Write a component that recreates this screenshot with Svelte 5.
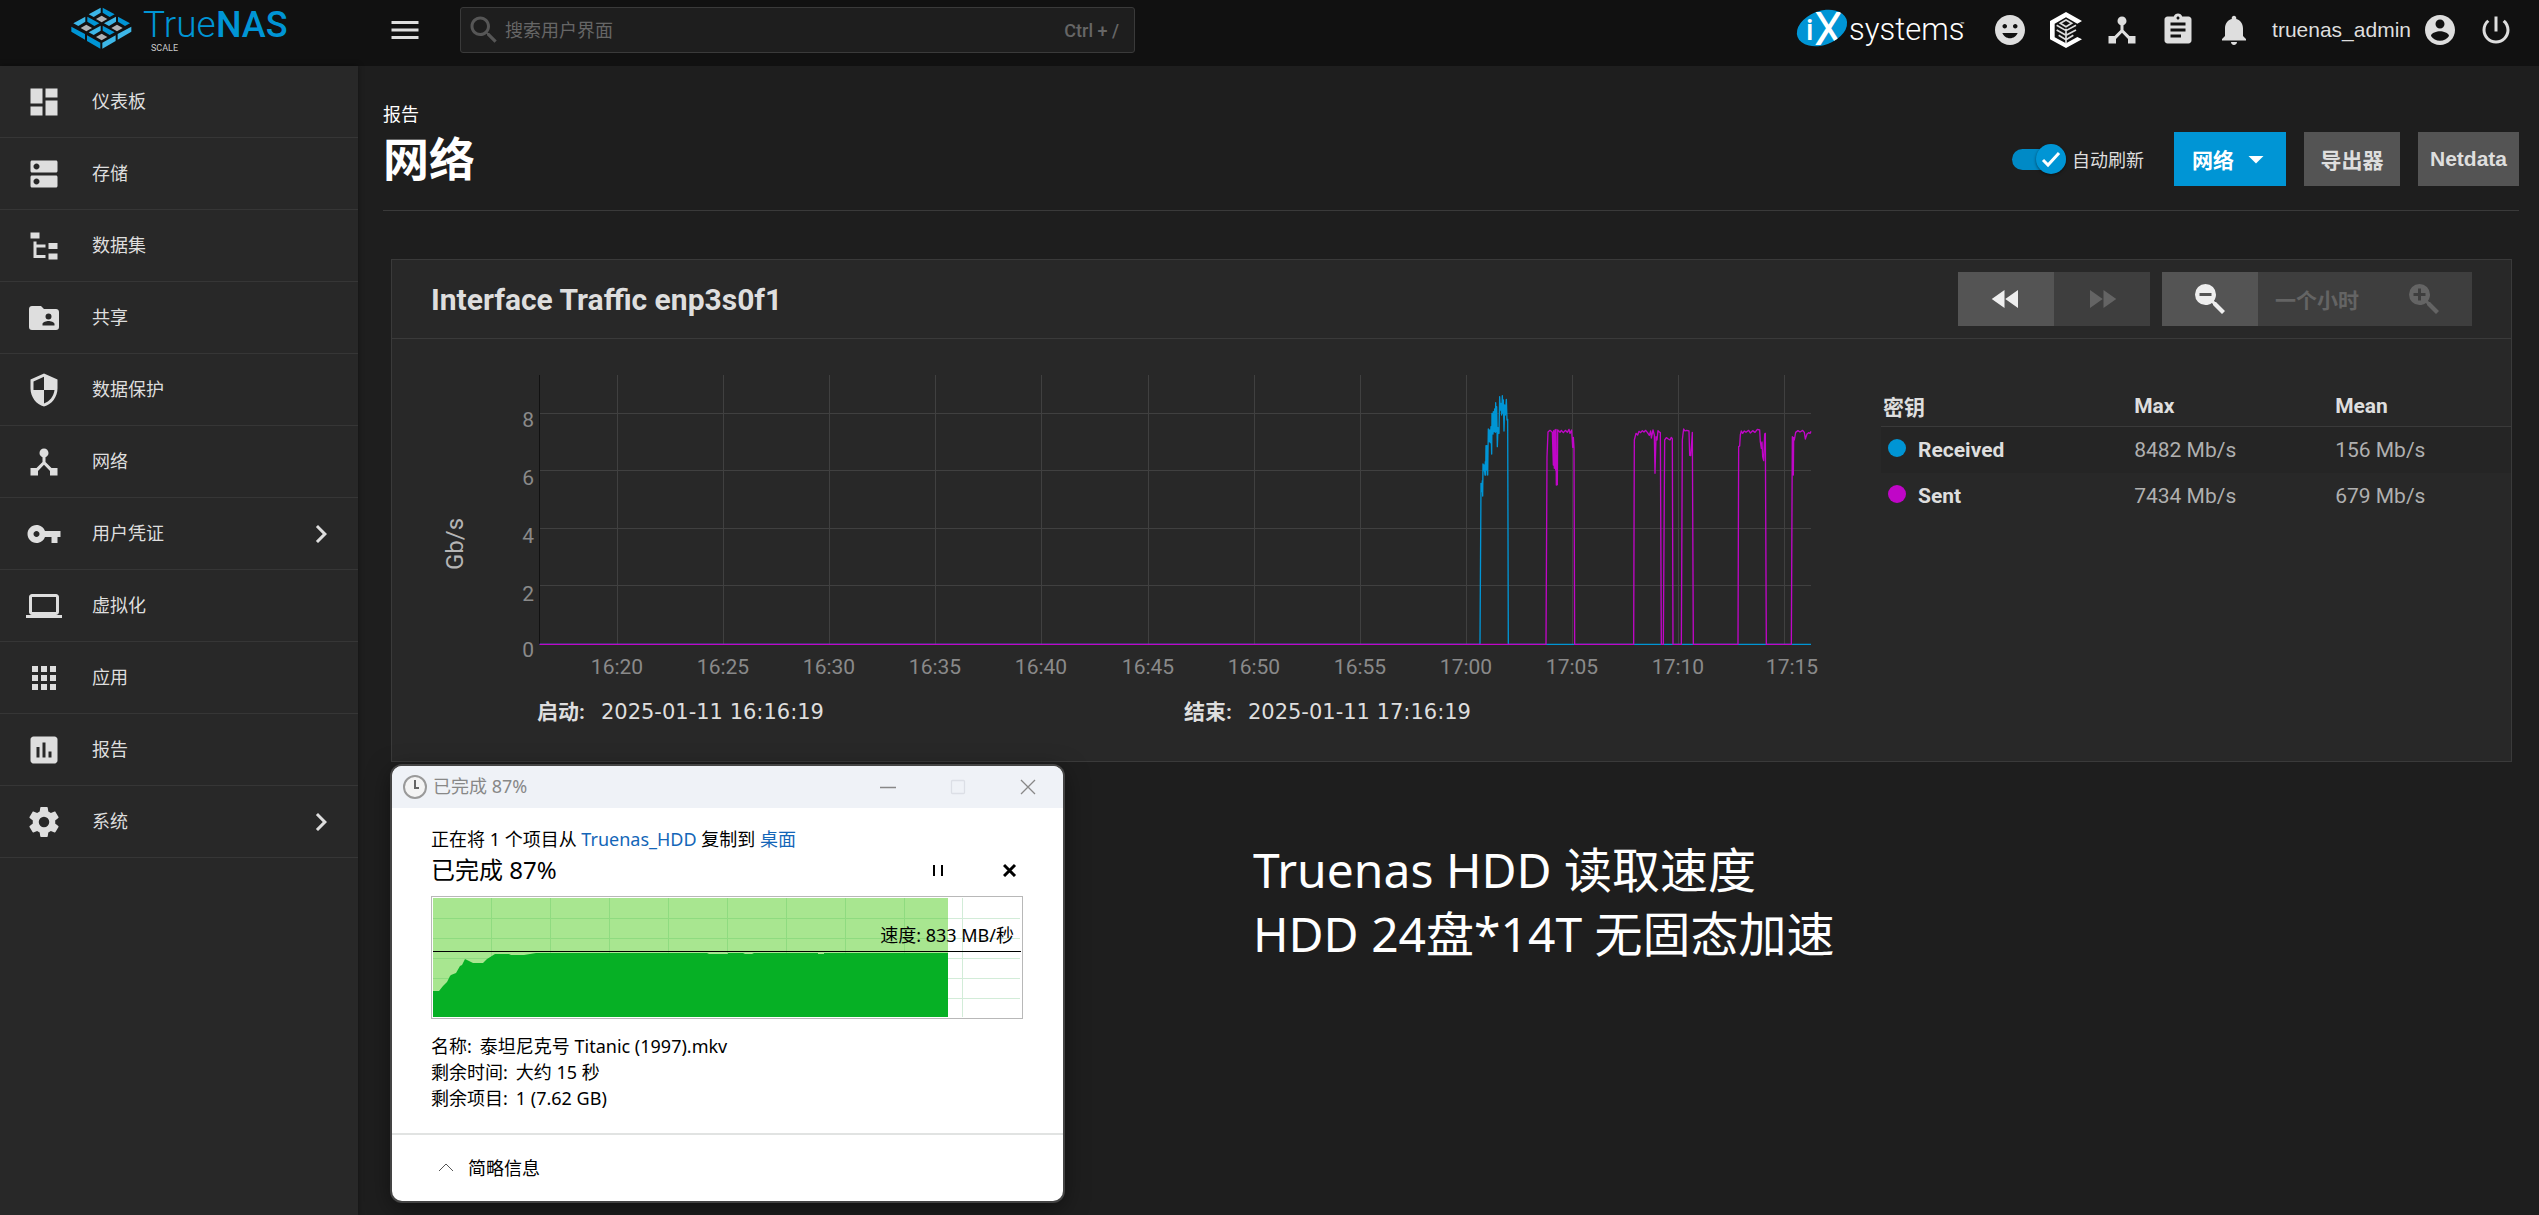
<script>
  const icons = {
    menu: 'M3 18h18v-2H3v2zm0-5h18v-2H3v2zm0-7v2h18V6H3z',
    search: 'M15.5 14h-.79l-.28-.27C15.41 12.59 16 11.11 16 9.5 16 5.91 13.09 3 9.5 3S3 5.91 3 9.5 5.91 16 9.5 16c1.61 0 3.09-.59 4.23-1.57l.27.28v.79l5 4.99L20.49 19l-4.99-5zm-6 0C7.01 14 5 11.99 5 9.5S7.01 5 9.5 5 14 7.01 14 9.5 11.99 14 9.5 14z',
    dashboard: 'M3 13h8V3H3v10zm0 8h8v-6H3v6zm10 0h8V11h-8v10zm0-18v6h8V3h-8z',
    storage: 'M20 13H4c-.55 0-1 .45-1 1v6c0 .55.45 1 1 1h16c.55 0 1-.45 1-1v-6c0-.55-.45-1-1-1zM7 19c-1.1 0-2-.9-2-2s.9-2 2-2 2 .9 2 2-.9 2-2 2zM20 3H4c-.55 0-1 .45-1 1v6c0 .55.45 1 1 1h16c.55 0 1-.45 1-1V4c0-.55-.45-1-1-1zM7 9c-1.1 0-2-.9-2-2s.9-2 2-2 2 .9 2 2-.9 2-2 2z',
    tree: 'M3 3h6v4H3V3m12 7h6v4h-6v-4m0 7h6v4h-6v-4m-2-4H7v5h6v2H5V9h2v2h6v2z',
    share: 'M19 17H11V16C11 14.67 13.67 14 15 14C16.33 14 19 14.67 19 16M15 9A2 2 0 0 1 17 11A2 2 0 0 1 15 13A2 2 0 0 1 13 11C13 9.89 13.9 9 15 9M20 6H12L10 4H4C2.89 4 2 4.89 2 6V18A2 2 0 0 0 4 20H20A2 2 0 0 0 22 18V8C22 6.89 21.1 6 20 6Z',
    shield: 'M12 1L3 5v6c0 5.55 3.84 10.74 9 12 5.16-1.26 9-6.45 9-12V5l-9-4zm0 10.99h7c-.53 4.12-3.28 7.79-7 8.94V12H5V6.3l7-3.11v8.8z',
    hub: 'M17 16l-4-4V8.82C14.16 8.4 15 7.3 15 6c0-1.66-1.34-3-3-3S9 4.34 9 6c0 1.3.84 2.4 2 2.82V12l-4 4H3v5h5v-3.05l4-4.2 4 4.2V21h5v-5h-4z',
    key: 'M12.65 10C11.83 7.67 9.61 6 7 6c-3.31 0-6 2.69-6 6s2.69 6 6 6c2.61 0 4.83-1.67 5.65-4H17v4h4v-4h2v-4H12.65zM7 14c-1.1 0-2-.9-2-2s.9-2 2-2 2 .9 2 2-.9 2-2 2z',
    laptop: 'M20 18c1.1 0 1.99-.9 1.99-2L22 6c0-1.1-.9-2-2-2H4c-1.1 0-2 .9-2 2v10c0 1.1.9 2 2 2H0v2h24v-2h-4zM4 6h16v10H4V6z',
    apps: 'M4 8h4V4H4v4zm6 12h4v-4h-4v4zm-6 0h4v-4H4v4zm0-6h4v-4H4v4zm6 0h4v-4h-4v4zm6-10v4h4V4h-4zm-6 4h4V4h-4v4zm6 6h4v-4h-4v4zm0 6h4v-4h-4v4z',
    chart: 'M19 3H5c-1.1 0-2 .9-2 2v14c0 1.1.9 2 2 2h14c1.1 0 2-.9 2-2V5c0-1.1-.9-2-2-2zM9 17H7v-7h2v7zm4 0h-2V7h2v10zm4 0h-2v-4h2v4z',
    cog: 'M12 15.5A3.5 3.5 0 0 1 8.5 12A3.5 3.5 0 0 1 12 8.5A3.5 3.5 0 0 1 15.5 12A3.5 3.5 0 0 1 12 15.5M19.43 12.97C19.47 12.65 19.5 12.33 19.5 12C19.5 11.67 19.47 11.34 19.43 11L21.54 9.37C21.73 9.22 21.78 8.95 21.66 8.73L19.66 5.27C19.54 5.05 19.27 4.96 19.05 5.05L16.56 6.05C16.04 5.66 15.5 5.32 14.87 5.07L14.5 2.42C14.46 2.18 14.25 2 14 2H10C9.75 2 9.54 2.18 9.5 2.42L9.13 5.07C8.5 5.32 7.96 5.66 7.44 6.05L4.95 5.05C4.73 4.96 4.46 5.05 4.34 5.27L2.34 8.73C2.21 8.95 2.27 9.22 2.46 9.37L4.57 11C4.53 11.34 4.5 11.67 4.5 12C4.5 12.33 4.53 12.65 4.57 12.97L2.46 14.63C2.27 14.78 2.21 15.05 2.34 15.27L4.34 18.73C4.46 18.95 4.73 19.03 4.95 18.95L7.44 17.94C7.96 18.34 8.5 18.68 9.13 18.93L9.5 21.58C9.54 21.82 9.75 22 10 22H14C14.25 22 14.46 21.82 14.5 21.58L14.87 18.93C15.5 18.67 16.04 18.34 16.56 17.94L19.05 18.95C19.27 19.03 19.54 18.95 19.66 18.73L21.66 15.27C21.78 15.05 21.73 14.78 21.54 14.63L19.43 12.97Z',
    chevron: 'M10 6L8.59 7.41 13.17 12l-4.58 4.59L10 18l6-6z',
    mood: 'M12 2C6.48 2 2 6.48 2 12s4.48 10 10 10 10-4.48 10-10S17.52 2 12 2zM8.5 8c.83 0 1.5.67 1.5 1.5S9.33 11 8.5 11 7 10.33 7 9.5 7.67 8 8.5 8zm7 0c.83 0 1.5.67 1.5 1.5s-.67 1.5-1.5 1.5S14 10.33 14 9.5 14.67 8 15.5 8zM12 17.5c-2.33 0-4.31-1.46-5.11-3.5h10.22c-.8 2.04-2.78 3.5-5.11 3.5z',
    clipboard: 'M19 3h-4.18C14.4 1.84 13.3 1 12 1c-1.3 0-2.4.84-2.82 2H5c-1.1 0-2 .9-2 2v14c0 1.1.9 2 2 2h14c1.1 0 2-.9 2-2V5c0-1.1-.9-2-2-2zm-7 0c.55 0 1 .45 1 1s-.45 1-1 1-1-.45-1-1 .45-1 1-1zm2 14H7v-2h7v2zm3-4H7v-2h10v2zm0-4H7V7h10v2z',
    bell: 'M12 22c1.1 0 2-.9 2-2h-4c0 1.1.89 2 2 2zm6-6v-5c0-3.07-1.64-5.64-4.5-6.32V4c0-.83-.67-1.5-1.5-1.5s-1.5.67-1.5 1.5v.68C7.63 5.36 6 7.92 6 11v5l-2 2v1h16v-1l-2-2z',
    account: 'M12 2C6.48 2 2 6.48 2 12s4.48 10 10 10 10-4.48 10-10S17.52 2 12 2zm0 3c1.66 0 3 1.34 3 3s-1.34 3-3 3-3-1.34-3-3 1.34-3 3-3zm0 14.2c-2.5 0-4.71-1.28-6-3.22.03-1.99 4-3.08 6-3.08 1.99 0 5.97 1.09 6 3.08-1.29 1.94-3.5 3.22-6 3.22z',
    power: 'M13 3h-2v10h2V3zm4.83 2.17l-1.42 1.42C17.99 7.86 19 9.81 19 12c0 3.87-3.13 7-7 7s-7-3.13-7-7c0-2.19 1.01-4.14 2.58-5.42L6.17 5.17C4.23 6.82 3 9.26 3 12c0 4.97 4.03 9 9 9s9-4.03 9-9c0-2.74-1.23-5.18-3.17-6.83z',
    dropdown: 'M7 10l5 5 5-5z',
    rewind: 'M11 18V6l-8.5 6 8.5 6zm.5-6l8.5 6V6l-8.5 6z',
    forward: 'M4 18l8.5-6L4 6v12zm9-12v12l8.5-6L13 6z',
    zoomOut: 'M9 2A7 7 0 0 1 16 9C16 10.57 15.5 12 14.61 13.19L15.41 14H16L22 20L20 22L14 16V15.41L13.19 14.61C12 15.5 10.57 16 9 16A7 7 0 0 1 2 9A7 7 0 0 1 9 2M5 8V10H13V8H5Z',
    zoomIn: 'M9 2A7 7 0 0 1 16 9C16 10.57 15.5 12 14.61 13.19L15.41 14H16L22 20L20 22L14 16V15.41L13.19 14.61C12 15.5 10.57 16 9 16A7 7 0 0 1 2 9A7 7 0 0 1 9 2M8 5V8H5V10H8V13H10V10H13V8H10V5H8Z',
  };

  const navItems = [
    { icon: 'dashboard', label: '仪表板' },
    { icon: 'storage', label: '存储' },
    { icon: 'tree', label: '数据集' },
    { icon: 'share', label: '共享' },
    { icon: 'shield', label: '数据保护' },
    { icon: 'hub', label: '网络' },
    { icon: 'key', label: '用户凭证', children: true },
    { icon: 'laptop', label: '虚拟化' },
    { icon: 'apps', label: '应用' },
    { icon: 'chart', label: '报告' },
    { icon: 'cog', label: '系统', children: true },
  ];

  const legend = [
    { name: 'Received', color: '#0095d5', max: '8482 Mb/s', mean: '156 Mb/s' },
    { name: 'Sent', color: '#c006c7', max: '7434 Mb/s', mean: '679 Mb/s' },
  ];

  const logoCells = [[64, 37], [18, 64], [110, 64], [64, 91]];

  const xLabels = ['16:20', '16:25', '16:30', '16:35', '16:40', '16:45', '16:50', '16:55', '17:00', '17:05', '17:10', '17:15'];
  // the last label sits a little right of its grid line
  const xTicks = xLabels.map((label, i) => {
    const x = Math.round(186 + i * 106.1);
    return { label, x, textX: i === xLabels.length - 1 ? x + 8 : x };
  });

  const yTicks = [
    { label: '8', y: 53, textY: 67 },
    { label: '6', y: 110, textY: 125 },
    { label: '4', y: 168, textY: 183 },
    { label: '2', y: 225, textY: 241 },
    { label: '0', y: null, textY: 297 },
  ];

  // both traces are in thirds of a plot pixel, with y = 853 as zero
  const received =
    'M-2701 853H120L123 370L125 395L127 362L128 408L129 312L131 332L132 315L135 345L136 305L137 345L138 257L140 330L141 257L143 345L145 207L147 245L149 210L151 248L153 200L155 282L156 160L159 222L160 155L162 215L164 147L166 217L167 128L169 215L170 140L172 260L174 203L177 220L179 110L181 150L183 130L185 165L187 107L189 160L190 120L192 213L194 135L196 165L199 118L201 180L203 178L205 853H1113';
  const sent =
    'M-2701 853H318L321 290L324 216L330 211L337 217L340 315L341 212L343 325L345 210L347 330L348 208L349 375L352 374L353 210L360 217L364 211L370 218L376 211L382 217L387 208L390 220L395 210L398 262L400 232L402 264L404 853H581L583 240L588 220L593 225L597 214L602 218L607 212L612 216L617 211L622 217L628 226L632 213L634 234L639 210L643 225L645 340L648 230L651 240L654 212L658 216L661 218L664 853H670L674 240L679 233L685 237L690 240L694 232L697 236L699 853H724L727 240L729 222L731 207L735 213L740 211L747 213L749 286L752 287L754 262L757 217L760 853H894L896 260L899 258L901 225L904 213L908 220L913 213L918 217L926 211L931 219L938 212L945 217L952 208L959 210L961 245L964 265L966 246L968 290L971 302L974 222L976 220L979 853H1054L1057 230L1060 345L1061 232L1063 240L1067 217L1074 212L1080 216L1088 211L1093 217L1096 237L1101 222L1106 218L1110 220L1113 214';

  const copyCols = Array.from({ length: 8 }, (_, i) => 59 + i * 59);
  const copyRows = [20, 40, 60, 80, 100];

  let autoRefresh = $state(true);
  let query = $state('');
</script>

{#snippet icon(name)}
  <svg class="icon" viewBox="0 0 24 24" aria-hidden="true"><path fill-rule="evenodd" d={icons[name]} /></svg>
{/snippet}

<div class="app">
  <header class="topbar">
    <a class="brand" href="#home" aria-label="TrueNAS SCALE">
      <svg width="220" height="60" viewBox="0 0 220 60">
        <g transform="translate(1 0) scale(.3333)">
          {#each logoCells as [cx, cy]}
            <g transform="translate({cx + 28} {cy + 20})">
              <path fill="#3db7e8" d="M-39-14L-3-34V-19L-24-6Z" />
              <path fill="#0095d5" d="M39-14L3-34V-19L24-6Z" />
              <path fill="#aeb2b5" d="M0-10L17 0L0 10L-17 0Z" />
            </g>
          {/each}
          <path fill="#0095d5" d="M1 80L42 102V119L1 95ZM48 106L88 128V146L48 123Z" />
          <path fill="#3db7e8" d="M181 80L140 102V119L181 95ZM134 106L94 128V146L134 123Z" />
        </g>
        <text class="logo-light" x="73" y="37">True</text>
        <text class="logo-bold" x="146" y="37">NAS</text>
        <text class="logo-sub" x="81" y="51">SCALE</text>
      </svg>
    </a>
    <button type="button" class="icon-btn menu" aria-label="Toggle menu">{@render icon('menu')}</button>
    <div class="search">
      {@render icon('search')}
      <input type="text" placeholder="搜索用户界面" aria-label="搜索用户界面" bind:value={query} />
      <kbd>Ctrl + /</kbd>
    </div>
    <div class="tools">
      <a class="ix" href="#ix" aria-label="iXsystems">
        <svg width="176" height="60" viewBox="0 0 176 60">
          <defs><clipPath id="ix-clip"><ellipse cx="28" cy="28" rx="26" ry="17" transform="rotate(-20 28 28)" /></clipPath></defs>
          <ellipse cx="28" cy="28" rx="26" ry="17" fill="#0095d5" transform="rotate(-20 28 28)" />
          <g clip-path="url(#ix-clip)">
            <text class="ix-i" x="12" y="40">i</text>
            <text class="ix-x" x="20" y="45">X</text>
          </g>
          <text class="ix-name" x="55" y="40">systems</text>
          <text class="ix-tm" x="166" y="27">™</text>
        </svg>
      </a>
      <button type="button" class="icon-btn" aria-label="Feedback">{@render icon('mood')}</button>
      <button type="button" class="icon-btn" aria-label="TrueCommand">
        <svg class="icon" viewBox="0 0 108 108" aria-hidden="true">
          <path fill="#fff" d="M54 0L102 27L88 35L54 16L20 35V76L54 94L88 75L102 82L54 108L6 82V27Z" />
          <path fill="none" stroke="#dedede" stroke-width="5" d="M54 24L71 34L54 44L37 34ZM26 40L54 56L84 40M26 54L54 70L84 54M32 70L54 83L76 70M54 50V94" />
        </svg>
      </button>
      <button type="button" class="icon-btn" aria-label="Directory services">{@render icon('hub')}</button>
      <button type="button" class="icon-btn" aria-label="Jobs">{@render icon('clipboard')}</button>
      <button type="button" class="icon-btn" aria-label="Alerts">{@render icon('bell')}</button>
      <button type="button" class="user">
        <span>truenas_admin</span>
        {@render icon('account')}
      </button>
      <button type="button" class="icon-btn" aria-label="Power">{@render icon('power')}</button>
    </div>
  </header>

  <div class="body">
    <nav class="sidebar">
      {#each navItems as item}
        <a class="nav-item" href="#{item.icon}">
          {@render icon(item.icon)}
          <span>{item.label}</span>
          {#if item.children}{@render icon('chevron')}{/if}
        </a>
      {/each}
    </nav>

    <main>
      <div class="page-head">
        <div>
          <a class="crumb" href="#reports">报告</a>
          <h1>网络</h1>
        </div>
        <div class="actions">
          <div class="toggle">
            <input id="auto-refresh" type="checkbox" role="switch" bind:checked={autoRefresh} />
            <label for="auto-refresh">
              <span class="track">
                <span class="knob">
                  <svg width="24" height="24" viewBox="0 0 24 24" fill="none" stroke="#fff" stroke-width="3"><path d="M4 13l5 5L20 6" /></svg>
                </span>
              </span>
              自动刷新
            </label>
          </div>
          <button type="button" class="btn primary">网络{@render icon('dropdown')}</button>
          <button type="button" class="btn">导出器</button>
          <button type="button" class="btn">Netdata</button>
        </div>
      </div>

      <section class="card">
        <div class="card-head">
          <h2>Interface Traffic enp3s0f1</h2>
          <div class="group">
            <button type="button" class="step" aria-label="Back">{@render icon('rewind')}</button>
            <button type="button" class="step" aria-label="Forward" disabled>{@render icon('forward')}</button>
          </div>
          <div class="group">
            <button type="button" class="step" aria-label="Zoom out">{@render icon('zoomOut')}</button>
            <span class="range">一个小时</span>
            <button type="button" class="step" aria-label="Zoom in" disabled>{@render icon('zoomIn')}</button>
          </div>
        </div>

        <div class="card-body">
          <div class="chart">
            <svg class="plot" viewBox="0 0 1400 330" role="img" aria-label="Interface Traffic enp3s0f1">
              <g class="grid">
                {#each xTicks as tick}
                  <line x1={tick.x + 0.5} x2={tick.x + 0.5} y1="15" y2="284" />
                {/each}
                {#each yTicks as tick}
                  {#if tick.y}
                    <line x1="109" x2="1380" y1={tick.y + 0.5} y2={tick.y + 0.5} />
                  {/if}
                {/each}
              </g>
              <line class="axis" x1="108.5" x2="108.5" y1="15" y2="284" />
              <g class="traces" transform="translate(1009 0) scale(.33333)">
                <path d={received} stroke={legend[0].color} />
                <path d={sent} stroke={legend[1].color} />
              </g>
              {#each yTicks as tick}
                <text class="tick" x="103" y={tick.textY} text-anchor="end">{tick.label}</text>
              {/each}
              {#each xTicks as tick}
                <text class="tick" x={tick.textX} y="314" text-anchor="middle">{tick.label}</text>
              {/each}
              <text class="unit" text-anchor="middle" transform="translate(32 184) rotate(-90)">Gb/s</text>
            </svg>
            <dl class="span">
              <div><dt>启动:</dt><dd>2025-01-11 16:16:19</dd></div>
              <div><dt>结束:</dt><dd>2025-01-11 17:16:19</dd></div>
            </dl>
          </div>

          <table class="legend">
            <thead>
              <tr><th>密钥</th><th>Max</th><th>Mean</th></tr>
            </thead>
            <tbody>
              {#each legend as row}
                <tr>
                  <th scope="row"><span class="dot" style:background={row.color}></span>{row.name}</th>
                  <td>{row.max}</td>
                  <td>{row.mean}</td>
                </tr>
              {/each}
            </tbody>
          </table>
        </div>
      </section>

      <div class="lower">
        <section class="window">
          <div class="titlebar">
            <svg width="24" height="24" viewBox="0 0 24 24" aria-hidden="true">
              <circle cx="12" cy="12" r="11" fill="#f4f4f4" stroke="#9a9a9a" stroke-width="2" />
              <path d="M12 5v8h4" fill="none" stroke="#666" stroke-width="2" />
            </svg>
            <span>已完成 87%</span>
            <button type="button" aria-label="Minimize"><svg width="16" height="16" viewBox="0 0 16 16"><path d="M0 8.5h16" /></svg></button>
            <button type="button" aria-label="Maximize" disabled><svg width="16" height="16" viewBox="0 0 16 16"><rect x="1.5" y="1.5" width="13" height="13" rx="1" /></svg></button>
            <button type="button" aria-label="Close"><svg width="16" height="16" viewBox="0 0 16 16"><path d="M1 1l14 14M15 1L1 15" /></svg></button>
          </div>
          <div class="copy">
            <p>正在将 1 个项目从 <a href="#source">Truenas_HDD</a> 复制到 <a href="#desktop">桌面</a></p>
            <div class="status">
              <strong>已完成 87%</strong>
              <button type="button" aria-label="Pause"><svg width="14" height="14" viewBox="0 0 14 14"><path d="M3 2v11M11 2v11" /></svg></button>
              <button type="button" aria-label="Cancel"><svg width="14" height="14" viewBox="0 0 14 14"><path stroke-width="3" d="M1 2l11 11M12 2L1 13" /></svg></button>
            </div>
            <svg class="speed" viewBox="0 0 592 123" role="img" aria-label="速度: 833 MB/秒">
              <rect x=".5" y=".5" width="591" height="122" fill="#fff" stroke="#b8b8b8" />
              <g stroke="#d2ecd8">
                {#each copyRows as y}<line x1="517" x2="589" y1={y + 2.5} y2={y + 2.5} />{/each}
                <line x1="531.5" x2="531.5" y1="2" y2="121" />
              </g>
              <rect x="2" y="2" width="515" height="119" fill="#a8e690" />
              <g stroke="#8fdb80">
                {#each copyRows as y}<line x1="2" x2="517" y1={y + 2.5} y2={y + 2.5} />{/each}
                {#each copyCols as x}<line x1={x + 1.5} x2={x + 1.5} y1="2" y2="121" />{/each}
              </g>
              <path fill="#06b025" d="M2 121V95H8L12 90L16 86L19 80L20 79L25 77L29 70L31 69L34 63L38 65L42 67H52L56 63L64 58H78L80 59H93L105 57H276L278 58H297V57H312L314 58H321L323 57H387V58H393V57H517V121Z" />
              <line x1="2" x2="590" y1="55.5" y2="55.5" stroke="#000" />
              <text x="583" y="46" text-anchor="end">速度: 833 MB/秒</text>
            </svg>
            <dl>
              <div><dt>名称:</dt><dd>泰坦尼克号 Titanic (1997).mkv</dd></div>
              <div><dt>剩余时间:</dt><dd>大约 15 秒</dd></div>
              <div><dt>剩余项目:</dt><dd>1 (7.62 GB)</dd></div>
            </dl>
          </div>
          <button type="button" class="less">
            <svg width="16" height="10" viewBox="0 0 16 10"><path d="M1 9l7-7 7 7" fill="none" stroke="#555" /></svg>
            简略信息
          </button>
        </section>

        <p class="note">Truenas HDD 读取速度<br />HDD 24盘*14T 无固态加速</p>
      </div>
    </main>
  </div>
</div>

<style>
  :global(body) {
    background: #1e1e1e;
  }

  .app {
    --fg: #dedede;
    --line: #3a3a3a;
    --blue: #0095d5;
    display: flex;
    flex-direction: column;
    min-height: 100vh;
    color: var(--fg);
    font-family: Roboto, "Noto Sans CJK SC", sans-serif;
    font-size: 18px;
  }

  a { color: inherit; text-decoration: none; }
  h1, h2, p, dl, dd { margin: 0; }

  button {
    padding: 0;
    border: none;
    background: none;
    color: inherit;
    font: inherit;
    cursor: pointer;
  }

  .icon {
    display: block;
    flex-shrink: 0;
    width: 36px;
    height: 36px;
    fill: currentColor;
  }

  .topbar {
    display: flex;
    align-items: center;
    box-sizing: border-box;
    height: 66px;
    padding: 0 25px 6px 0;
    background: #111;
  }

  .brand {
    width: 317px;
    padding-left: 70px;
  }

  .brand svg, .ix svg { display: block; overflow: visible; }

  .logo-light { font: 300 37px Roboto, sans-serif; fill: var(--blue); }
  .logo-bold { font: 500 36px Roboto, sans-serif; fill: var(--blue); }
  .logo-sub { font: 9px Roboto, sans-serif; fill: #ccc; }
  .ix-i { font: 500 29px Roboto, sans-serif; fill: #fff; }
  .ix-x { font: 46px Roboto, sans-serif; fill: #fff; }
  .ix-name { font: 300 31px Roboto, sans-serif; fill: #fff; }
  .ix-tm { font: 7px Roboto, sans-serif; fill: #fff; }

  .search {
    display: flex;
    align-items: center;
    box-sizing: border-box;
    flex: 0 1 675px;
    height: 46px;
    margin-left: 37px;
    padding: 0 15px 0 5px;
    border: 1px solid var(--line);
    border-radius: 3px;
    background: #1e1e1e;
    color: #565656;
  }

  .search input {
    flex: 1;
    min-width: 0;
    padding: 0 3px;
    border: none;
    outline: none;
    background: transparent;
    color: var(--fg);
    font: inherit;
  }

  .search input::placeholder { color: #666; opacity: 1; }
  .search kbd { color: #666; font: inherit; font-weight: 500; }

  .tools {
    display: flex;
    align-items: center;
    gap: 20px;
    margin-left: auto;
  }

  .ix { margin-right: 2px; }

  .user {
    display: flex;
    align-items: center;
    gap: 11px;
    font: 21px "Liberation Sans", sans-serif;
  }

  .body {
    display: flex;
    flex: 1;
  }

  .sidebar {
    flex: 0 0 358px;
    background: #282828;
    box-shadow: 0 0 6px rgba(0, 0, 0, 0.4);
  }

  .nav-item {
    display: flex;
    align-items: center;
    box-sizing: border-box;
    height: 72px;
    padding: 0 19px 0 26px;
    border-bottom: 1px solid #363636;
  }

  .nav-item span {
    flex: 1;
    padding: 0 0 4px 30px;
  }

  main {
    flex: 1;
    min-width: 0;
    padding: 36px 20px 12px 25px;
  }

  .page-head {
    display: flex;
    align-items: flex-end;
    justify-content: space-between;
    padding-bottom: 24px;
    border-bottom: 1px solid var(--line);
  }

  .crumb {
    display: block;
    line-height: 26px;
    color: #fff;
  }

  h1 {
    margin-top: 6px;
    color: #fff;
    font-size: 46px;
    font-weight: 700;
    line-height: 52px;
  }

  .actions {
    display: flex;
    align-items: center;
    gap: 18px;
  }

  .toggle { margin-right: 12px; }

  .toggle input {
    position: absolute;
    opacity: 0;
  }

  .toggle label {
    display: flex;
    align-items: center;
    gap: 6px;
    cursor: pointer;
  }

  .track {
    display: flex;
    align-items: center;
    justify-content: flex-end;
    width: 54px;
    height: 21px;
    border-radius: 11px;
    background: #008ac6;
  }

  .knob {
    display: grid;
    place-items: center;
    width: 30px;
    height: 30px;
    border-radius: 50%;
    background: var(--blue);
    box-shadow: 0 1px 3px rgba(0, 0, 0, 0.5);
  }

  .btn {
    display: flex;
    align-items: center;
    justify-content: center;
    box-sizing: border-box;
    min-width: 96px;
    height: 54px;
    padding: 0 12px;
    background: #545454;
    font-family: "Liberation Sans", "Noto Sans CJK SC", sans-serif;
    font-size: 21px;
    font-weight: 700;
  }

  .btn.primary {
    gap: 4px;
    padding-left: 18px;
    background: var(--blue);
    color: #fff;
  }

  .card {
    margin: 48px 7px 0 8px;
    border: 1px solid var(--line);
    background: #282828;
  }

  .card-head {
    display: flex;
    align-items: center;
    gap: 12px;
    height: 78px;
    padding: 0 39px;
    border-bottom: 1px solid var(--line);
  }

  h2 {
    flex: 1;
    font-size: 30px;
    font-weight: 700;
  }

  .group {
    display: flex;
    align-items: center;
    height: 54px;
    background: #3e3e3e;
  }

  .step {
    display: grid;
    place-items: center;
    width: 96px;
    height: 54px;
    background: #545454;
    color: #eee;
  }

  .step:disabled {
    background: #3e3e3e;
    color: #646464;
    cursor: default;
  }

  .range {
    padding: 0 17px;
    color: #646464;
    font-size: 21px;
    font-weight: 700;
  }

  .card-body {
    display: flex;
    gap: 50px;
    padding: 21px 0 33px 39px;
  }

  .chart {
    flex: 1;
    min-width: 0;
  }

  .plot {
    display: block;
    width: 100%;
  }

  .grid line { stroke: #404040; }
  .axis { stroke: #111; }

  .traces path {
    fill: none;
    stroke-width: 4;
    stroke-linejoin: round;
  }

  .tick { fill: #8a8a8a; font-size: 21px; }
  .unit { fill: #b5b5b5; font-size: 24px; }

  .span {
    display: grid;
    grid-template-columns: 1fr 1fr;
    margin-top: 6px;
    padding-left: 106px;
    font-size: 21px;
    line-height: 32px;
  }

  .span div {
    display: flex;
    gap: 16px;
  }

  .span dt { font-weight: 700; }
  .span dd { font-family: "DejaVu Sans", sans-serif; }

  .legend {
    flex: 0 0 630px;
    align-self: flex-start;
    width: 630px;
    margin-top: 26px;
    border-collapse: collapse;
    table-layout: fixed;
    font-size: 21px;
    text-align: left;
  }

  .legend th, .legend td { padding: 0; }

  .legend thead th {
    width: 28%;
    height: 40px;
    border-bottom: 1px solid var(--line);
  }

  .legend thead th:first-child { width: 40%; padding-left: 2px; }
  .legend thead th:nth-child(2) { width: 32%; }
  .legend tbody tr { height: 46px; }
  .legend tbody tr:nth-child(odd) { background: #252525; }
  .legend td { color: #b0b0b0; }
  .legend tbody th { padding-left: 7px; }

  .dot {
    display: inline-block;
    width: 18px;
    height: 18px;
    margin-right: 12px;
    border-radius: 50%;
  }

  .lower {
    display: flex;
    align-items: flex-start;
    gap: 190px;
    margin-top: 4px;
    padding-left: 9px;
  }

  .window {
    flex: 0 0 671px;
    overflow: hidden;
    border-radius: 10px;
    background: #fff;
    box-shadow: 0 0 0 2px #444, 0 6px 24px rgba(0, 0, 0, 0.5);
    color: #000;
    font-family: "Noto Sans", "Noto Sans CJK SC", sans-serif;
    font-size: 18px;
  }

  .titlebar {
    display: flex;
    align-items: center;
    height: 42px;
    padding-left: 11px;
    background: #eff2f7;
    color: #888;
    line-height: 24px;
  }

  .titlebar span {
    flex: 1;
    padding: 0 0 2px 6px;
  }

  .titlebar button {
    display: grid;
    place-items: center;
    width: 70px;
    height: 42px;
  }

  .titlebar button svg {
    fill: none;
    stroke: #888;
    stroke-width: 1.3;
  }

  .titlebar button:disabled svg { stroke: #dcdfe6; }

  .copy {
    padding: 18px 40px 22px 39px;
    line-height: 26px;
  }

  .copy a { color: #1466b8; }

  .status {
    display: flex;
    align-items: center;
    gap: 58px;
    height: 36px;
    padding-right: 6px;
  }

  .status strong {
    flex: 1;
    font-size: 24px;
    font-weight: 400;
  }

  .status svg {
    display: block;
    stroke: #000;
    stroke-width: 2;
  }

  .speed {
    display: block;
    width: 100%;
    margin: 8px 0 14px;
  }

  .copy dl div {
    display: flex;
    gap: 8px;
  }

  .less {
    display: flex;
    align-items: center;
    gap: 14px;
    width: 100%;
    height: 68px;
    padding: 0 0 2px 46px;
    border-top: 2px solid #e1e3e2;
  }

  .note {
    margin-top: 72px;
    color: #fff;
    font-family: "Noto Sans", "Noto Sans CJK SC", sans-serif;
    font-size: 48px;
    line-height: 64px;
  }
</style>
